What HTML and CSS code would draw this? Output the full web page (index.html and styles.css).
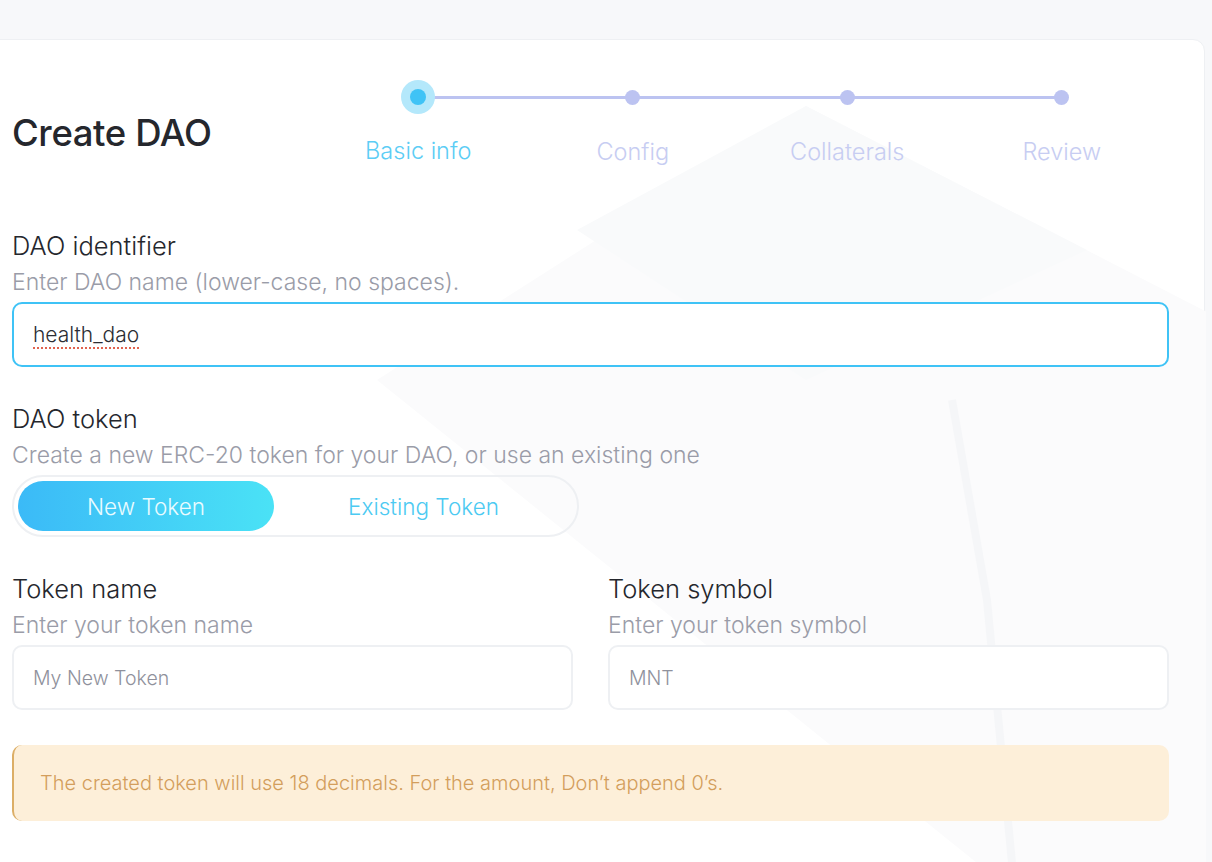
FILE: index.html
```html
<!DOCTYPE html>
<html lang="en">
<head>
    <meta charset="UTF-8">
    <meta name="viewport" content="width=device-width, initial-scale=1.0">
    <title>Create DAO</title>
    <link rel="stylesheet" href="styles.css">
</head>
<body>
    <div class="page">
        <div class="card">
            <!-- faint logo watermark behind the form -->
            <svg class="watermark" width="1229" height="823" viewBox="0 0 1229 823">
                <polygon points="829,66 1236,275 1236,823 1000,823 400,340" fill="#fbfbfc"/>
                <polygon points="829,66 1110,210 829,340 600,190" fill="#f9fafb"/>
                <path d="M975,360 L1010,560 L1035,823" stroke="#f5f6f8" stroke-width="8" fill="none"/>
            </svg>

            <div class="header">
                <h1>Create DAO</h1>
                <ol class="stepper">
                    <li class="step active"><span class="dot"></span><span class="step-label">Basic info</span></li>
                    <li class="step"><span class="dot"></span><span class="step-label">Config</span></li>
                    <li class="step"><span class="dot"></span><span class="step-label">Collaterals</span></li>
                    <li class="step"><span class="dot"></span><span class="step-label">Review</span></li>
                </ol>
            </div>

            <div class="field first">
                <label class="field-title">DAO identifier</label>
                <p class="field-desc">Enter DAO name (lower-case, no spaces).</p>
                <div class="input focused"><span class="misspelled">health_dao</span></div>
            </div>

            <div class="field">
                <label class="field-title">DAO token</label>
                <p class="field-desc">Create a new ERC-20 token for your DAO, or use an existing one</p>
                <div class="toggle">
                    <button class="toggle-btn selected">New Token</button>
                    <button class="toggle-btn">Existing Token</button>
                </div>
            </div>

            <div class="field-row">
                <div class="field">
                    <label class="field-title">Token name</label>
                    <p class="field-desc">Enter your token name</p>
                    <div class="input"><span class="placeholder">My New Token</span></div>
                </div>
                <div class="field">
                    <label class="field-title">Token symbol</label>
                    <p class="field-desc">Enter your token symbol</p>
                    <div class="input"><span class="placeholder">MNT</span></div>
                </div>
            </div>

            <div class="notice">
                The created token will use 18 decimals. For the amount, Don’t append 0’s.
            </div>
        </div>
    </div>
</body>
</html>
```

FILE: styles.css
```css
body {
    margin: 0;
    padding: 0;
    background-color: #f7f8fa;
    font-family: 'Inter', 'Noto Sans', sans-serif;
    color: #2b2d33;
    overflow: hidden;
}

.page {
    padding-top: 39px;
    height: 823px;
}

.card {
    position: relative;
    margin-left: -24px;
    width: 1229px;
    height: 860px;
    box-sizing: border-box;
    padding: 40px 35px 0 35px;
    background-color: #ffffff;
    border: 1px solid #eef0f3;
    border-radius: 12px;
}

.watermark {
    position: absolute;
    top: 0;
    left: 0;
    z-index: 0;
}

.header, .field, .field-row, .notice {
    position: relative;
    z-index: 1;
}

.header {
    display: flex;
    align-items: flex-start;
}

h1 {
    width: 299px;
    margin: 31px 0 0 0;
    font-size: 36.5px;
    font-weight: 500;
    letter-spacing: -0.4px;
    line-height: 44px;
    color: #25272d;
}

.stepper {
    display: flex;
    flex: 1;
    margin: 0;
    padding: 0;
    list-style: none;
}

.step {
    position: relative;
    flex: 1;
    display: flex;
    flex-direction: column;
    align-items: center;
}

.step:not(:last-child)::after {
    content: '';
    position: absolute;
    top: 16px;
    left: 50%;
    width: 100%;
    height: 3px;
    background-color: #bcc3f1;
}

.dot {
    position: relative;
    z-index: 1;
    width: 15px;
    height: 15px;
    margin: 10px 0;
    border-radius: 50%;
    background-color: #bcc3f1;
}

.step.active .dot {
    width: 16px;
    height: 16px;
    margin: 9px 0;
    background-color: #3fc3f6;
    box-shadow: 0 0 0 9px #b4e8fb;
}

.step-label {
    margin-top: 23px;
    font-size: 23.5px;
    font-weight: 300;
    line-height: 28px;
    color: #c7cdf2;
}

.step.active .step-label {
    color: #5ccdf5;
}

.field {
    margin-top: 36px;
}

.field.first {
    margin-top: 64px;
}

.field-title {
    display: block;
    font-size: 25.5px;
    font-weight: 300;
    line-height: 32px;
    color: #25272d;
}

.field-desc {
    margin: 5px 0 5px 0;
    font-size: 23px;
    font-weight: 300;
    line-height: 30px;
    color: #9a9ca8;
}

.input {
    display: flex;
    align-items: center;
    height: 65px;
    box-sizing: border-box;
    padding: 0 19px;
    border: 2px solid #eef0f3;
    border-radius: 10px;
    background-color: #ffffff;
    font-size: 19.5px;
    font-weight: 300;
}

.input.focused {
    border-color: #3fc3f6;
    color: #2b2d33;
    font-size: 21px;
}

.misspelled {
    text-decoration: underline dotted #e0634f;
    text-decoration-thickness: 2px;
    text-underline-offset: 5px;
}

.placeholder {
    color: #8f919c;
}

.toggle {
    display: flex;
    width: 567px;
    height: 62px;
    box-sizing: border-box;
    padding: 4px;
    border: 2px solid #eef0f3;
    border-radius: 31px;
}

.toggle-btn {
    flex: 1;
    border: none;
    background: none;
    font-family: inherit;
    font-size: 22.5px;
    font-weight: 300;
    color: #4ccaf2;
    border-radius: 25px;
    cursor: pointer;
}

.toggle-btn.selected {
    flex: 0 0 256px;
    background: linear-gradient(90deg, #3bbaf7, #4ae2f6);
    color: #e9fbff;
}

.field-row {
    display: flex;
    gap: 35px;
}

.field-row .field {
    flex: 1;
}

.notice {
    margin-top: 35px;
    height: 76px;
    box-sizing: border-box;
    display: flex;
    align-items: center;
    padding: 0 26px;
    background-color: #fdefd9;
    border-left: 2px solid #dcae66;
    border-radius: 10px;
    font-size: 20px;
    font-weight: 300;
    color: #d39e5c;
}
```
